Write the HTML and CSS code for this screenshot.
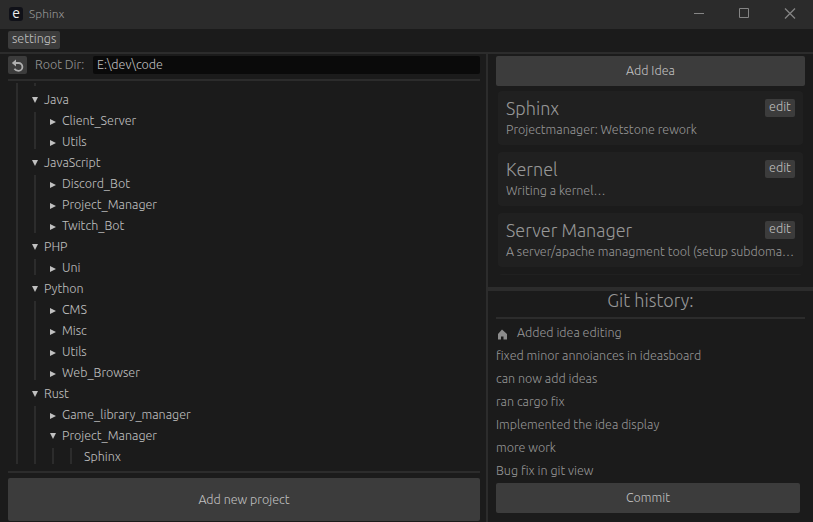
FILE: index.html
```html
<!DOCTYPE html>
<html lang="en">
<head>
<meta charset="utf-8">
<title>Sphinx</title>
<link rel="stylesheet" href="styles.css">
</head>
<body>
<header class="titlebar">
  <span class="logo">e</span>
  <span class="app-name">Sphinx</span>
  <svg class="window-controls" width="104" height="12" viewBox="0 0 104 12" fill="none" stroke="#858585">
    <path d="M0 5.5h10M45.5 .5h9v9h-9z"/><path stroke-width="1.3" d="M91 .5l10 10M101 .5l-10 10"/>
  </svg>
</header>
<nav class="menu"><button class="small">settings</button></nav>
<main class="workspace">
  <section class="projects">
    <div class="root-row">
      <button class="refresh" aria-label="Refresh"><svg width="13" height="13" viewBox="0 0 13 13"><path d="M2.500 4H7.500a3.900 3.900 0 0 1 0 7.800C5.500 11.800 4.200 11 3.400 9.800" fill="none" stroke="#b0b0b0" stroke-width="1.800"/><path d="M.8 4L5 .5v7z" fill="#b0b0b0"/></svg></button>
      <label>Root Dir:</label>
      <div class="path">E:\dev\code</div>
    </div>
    <hr>
    <div class="tree">
      <div class="branch root">
        <div class="branch"><div class="node closed">Utils</div></div>
        <div class="node open">Java</div>
        <div class="branch"><div class="node closed">Client_Server</div><div class="node closed">Utils</div></div>
        <div class="node open">JavaScript</div>
        <div class="branch"><div class="node closed">Discord_Bot</div><div class="node closed">Project_Manager</div><div class="node closed">Twitch_Bot</div></div>
        <div class="node open">PHP</div>
        <div class="branch"><div class="node closed">Uni</div></div>
        <div class="node open">Python</div>
        <div class="branch"><div class="node closed">CMS</div><div class="node closed">Misc</div><div class="node closed">Utils</div><div class="node closed">Web_Browser</div></div>
        <div class="node open">Rust</div>
        <div class="branch"><div class="node closed">Game_library_manager</div><div class="node open">Project_Manager</div>
          <div class="branch"><div class="branch"><div class="node leaf">Sphinx</div></div></div>
        </div>
      </div>
    </div>
    <hr>
    <button class="add-project">Add new project</button>
  </section>
  <section class="side">
    <div class="ideas">
      <button class="wide">Add Idea</button>
      <div class="cards">
        <article class="card"><div class="card-head"><h2>Sphinx</h2><button class="small">edit</button></div><p>Projectmanager: Wetstone rework</p></article>
        <article class="card"><div class="card-head"><h2>Kernel</h2><button class="small">edit</button></div><p>Writing a kernel…</p></article>
        <article class="card"><div class="card-head"><h2>Server Manager</h2><button class="small">edit</button></div><p>A server/apache managment tool (setup subdoma…</p></article>
        <article class="card"></article>
      </div>
    </div>
    <div class="history">
      <h2>Git history:</h2>
      <hr>
      <ul>
        <li><svg width="11" height="11" viewBox="0 0 11 11"><path d="M5 .5L10 5v5.500H6.500V7.500H4V10.500H1V5z" fill="#8c8c8c"/></svg><span>Added idea editing</span></li>
        <li>fixed minor annoiances in ideasboard</li>
        <li>can now add ideas</li>
        <li>ran cargo fix</li>
        <li>Implemented the idea display</li>
        <li>more work</li>
        <li>Bug fix in git view</li>
      </ul>
      <button class="wide commit">Commit</button>
    </div>
  </section>
</main>
</body>
</html>
```
FILE: styles.css
```css
* { box-sizing: border-box; }
body {
  margin: 0;
  height: 522px;
  overflow: hidden;
  display: flex;
  flex-direction: column;
  background: #1b1b1b;
  color: #979797;
  font: 300 12.5px/18px Ubuntu, "Noto Sans", sans-serif;
}
button {
  border: 0;
  padding: 0;
  border-radius: 2px;
  background: #3c3c3c;
  color: #c0c0c0;
  font: inherit;
}
h2, p, ul { margin: 0; padding: 0; }
h2 { font-size: 18px; font-weight: 300; line-height: 22px; }
hr { width: 100%; height: 2px; margin: 0; border: 0; background: #2c2c2c; flex: none; }
.titlebar {
  height: 29px;
  flex: none;
  display: flex;
  align-items: center;
  padding: 0 15px 2px 9px;
  background: #2b2b2b;
}
.logo {
  width: 14px;
  height: 14px;
  border-radius: 3px;
  background: #101118;
  color: #eee;
  font: 400 14px/12px Ubuntu, "Noto Sans", sans-serif;
  text-align: center;
}
.app-name { margin-left: 6px; font-size: 12px; }
.window-controls { margin-left: auto; }
.menu { height: 25px; flex: none; padding: 2px 8px; border-bottom: 2px solid #2c2c2c; }
.small { display: block; height: 18px; padding: 0 4px 3px; line-height: 15px; }
.menu .small { width: 52px; }
.workspace { flex: 1; min-height: 0; display: flex; }
.projects {
  width: 488px;
  flex: none;
  display: flex;
  flex-direction: column;
  padding: 2px 6px 0 8px;
  border-right: 2px solid #2c2c2c;
}
.projects > * { width: 472px; }
.root-row { height: 18px; margin-bottom: 5px; display: flex; flex: none; line-height: 17px; }
.refresh { width: 19px; height: 18px; display: grid; place-items: center; }
.root-row label { width: 50px; margin: 0 8px; white-space: nowrap; }
.path { flex: 1; padding-left: 4px; border-radius: 2px; background: #0a0a0a; color: #c0c0c0; }
.tree {
  height: 381px;
  margin: 2px 0 7px;
  overflow: hidden;
  display: flex;
  flex-direction: column;
  justify-content: flex-end;
  flex: none;
}
.branch {
  margin-left: 8px;
  padding-left: 10px;
  display: flex;
  flex-direction: column;
  gap: 3px;
  background: linear-gradient(#2c2c2c, #2c2c2c) 0 0 / 2px calc(100% - 2px) no-repeat;
}
.root { margin-bottom: -2px; }
.node { height: 18px; line-height: 16px; color: #c0c0c0; padding-left: 18px; position: relative; }
.node.leaf { padding-left: 4px; }
.open::before, .closed::before { content: ""; position: absolute; left: 6px; top: 6px; width: 6px; height: 6px; background: #c0c0c0; }
.open::before { clip-path: polygon(0 0, 100% 0, 50% 100%); }
.closed::before { top: 7px; clip-path: polygon(0 0, 100% 50%, 0 100%); }
.add-project { height: 43px; margin-top: 5px; padding-bottom: 1px; }
.side { flex: 1; min-width: 0; display: flex; flex-direction: column; }
.ideas { height: 237px; flex: none; padding: 2px 8px 12px; border-bottom: 4px solid #2c2c2c; }
.wide { display: block; width: 100%; height: 30px; padding-bottom: 2px; }
.cards { height: 184px; margin: 5px 2px 0; overflow: hidden; display: flex; flex-direction: column; gap: 7px; }
.card { height: 54px; flex: none; padding: 8px; border-radius: 4px; background: #202020; }
.card-head { height: 20px; display: flex; justify-content: space-between; }
.card-head h2 { line-height: 19px; }
.card .small { width: 30px; }
.card p { margin-top: 1px; white-space: nowrap; }
.history { flex: 1; padding: 0 8px; }
.history h2 { height: 26px; line-height: 19px; text-align: center; }
.history ul { margin-top: 2px; list-style: none; }
.history li { height: 23px; line-height: 23px; display: flex; align-items: center; white-space: nowrap; }
.history svg { margin: 3px 9px 0 1px; }
.history .commit { width: 304px; margin-top: 1px; }
```
